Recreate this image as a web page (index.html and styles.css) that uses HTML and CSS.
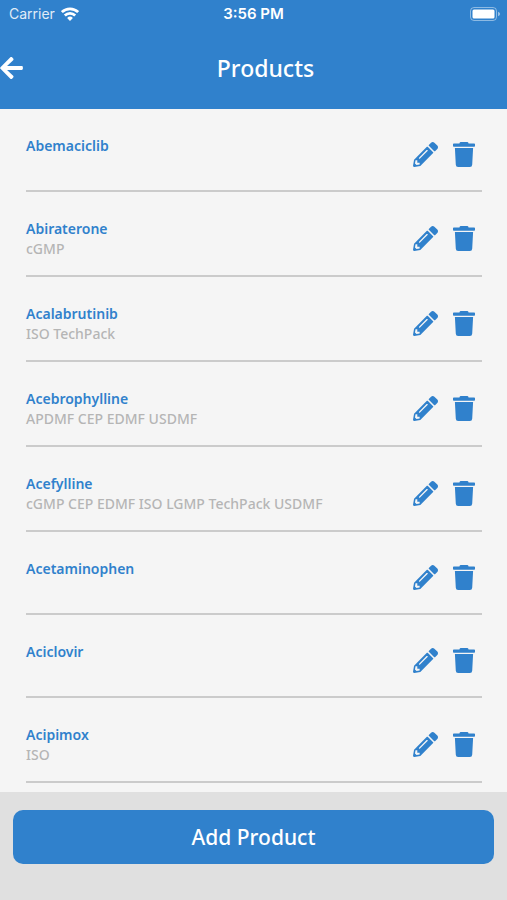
FILE: index.html
```html
<!DOCTYPE html>
<html lang="en">
<head>
<meta charset="utf-8">
<meta name="viewport" content="width=device-width, initial-scale=1">
<title>Products</title>
<link rel="stylesheet" href="styles.css">
</head>
<body>
<svg width="0" height="0" class="sprite" aria-hidden="true">
  <symbol id="pencil" viewBox="0 0 512 512"><path d="M497.9 142.1l-46.1 46.1c-4.7 4.7-12.3 4.7-17 0l-111-111c-4.7-4.7-4.7-12.3 0-17l46.1-46.1c18.7-18.7 49.1-18.7 67.9 0l60.1 60.1c18.8 18.7 18.8 49.1 0 67.9zM284.2 99.8L21.6 362.4.4 483.9c-2.9 16.4 11.4 30.6 27.8 27.8l121.5-21.3 262.6-262.6c4.7-4.7 4.7-12.3 0-17l-111-111c-4.8-4.7-12.4-4.7-17.1 0zM124.1 339.9c-5.5-5.5-5.5-14.3 0-19.8l154-154c5.5-5.5 14.3-5.5 19.8 0s5.5 14.3 0 19.8l-154 154c-5.5 5.5-14.3 5.5-19.8 0zM88 424h48v36.3l-64.5 11.3-31.1-31.1L51.7 376H88v48z"/></symbol>
  <symbol id="trash" viewBox="0 0 22 25"><path d="M7.6 0h6.8q.6 0 .8.6l.4.9h5.6q.8 0 .8.8v1.6q0 .8-.8.8H.8q-.8 0-.8-.8V2.300q0-.8.8-.8h5.600l.4-.9q.2-.6.800-.6zM1.900 6.100h18.200l-.9 16.700q-.1 2.200-2.300 2.200H5.100q-2.200 0-2.300-2.200z"/></symbol>
</svg>
<header class="header">
  <div class="status">
    <div class="status-left">
      <span class="carrier">Carrier</span>
      <svg class="wifi" viewBox="0 0 18 14" aria-hidden="true"><g fill="none" stroke="currentColor" stroke-width="2.7"><path d="M.9 5.100a11.600 11.600 0 0 1 16.200 0"/><path d="M3.800 8.500a7.300 7.300 0 0 1 10.400 0"/></g><path fill="currentColor" d="M6.100 10.900a4.100 4.100 0 0 1 5.800 0L9 13.900z"/></svg>
    </div>
    <span class="clock">3:56 PM</span>
    <svg class="battery" viewBox="0 0 31 14" aria-hidden="true"><rect x=".5" y=".5" width="26" height="13" rx="3.5" fill="none" stroke="currentColor" opacity=".45"/><rect x="2.5" y="2.500" width="22" height="9" rx="1.5" fill="currentColor"/><path d="M28 4.800c2.800.8 2.800 3.600 0 4.400z" fill="currentColor" opacity=".5"/></svg>
  </div>
  <div class="nav">
    <button class="back" type="button" aria-label="Back"><svg viewBox="0 0 448 512" aria-hidden="true"><path d="M257.5 445.1l-22.2 22.2c-9.4 9.4-24.6 9.4-33.9 0L7 273c-9.4-9.4-9.4-24.6 0-33.9L201.4 44.7c9.4-9.4 24.6-9.4 33.9 0l22.2 22.2c9.5 9.5 9.3 25-.4 34.3L136.6 216H424c13.3 0 24 10.7 24 24v32c0 13.3-10.7 24-24 24H136.6l120.5 114.8c9.8 9.3 10 24.8.4 34.3z"/></svg></button>
    <h1 class="title">Products</h1>
  </div>
</header>
<main class="content">
  <ul class="products">
    <li class="product"><div class="info"><h2 class="name">Abemaciclib</h2></div><button class="action" type="button" aria-label="Edit Abemaciclib"><svg class="pencil"><use href="#pencil"/></svg></button><button class="action" type="button" aria-label="Delete Abemaciclib"><svg class="trash"><use href="#trash"/></svg></button></li>
    <li class="product"><div class="info"><h2 class="name">Abiraterone</h2><p class="tags">cGMP</p></div><button class="action" type="button" aria-label="Edit Abiraterone"><svg class="pencil"><use href="#pencil"/></svg></button><button class="action" type="button" aria-label="Delete Abiraterone"><svg class="trash"><use href="#trash"/></svg></button></li>
    <li class="product"><div class="info"><h2 class="name">Acalabrutinib</h2><p class="tags">ISO TechPack</p></div><button class="action" type="button" aria-label="Edit Acalabrutinib"><svg class="pencil"><use href="#pencil"/></svg></button><button class="action" type="button" aria-label="Delete Acalabrutinib"><svg class="trash"><use href="#trash"/></svg></button></li>
    <li class="product"><div class="info"><h2 class="name">Acebrophylline</h2><p class="tags">APDMF CEP EDMF USDMF</p></div><button class="action" type="button" aria-label="Edit Acebrophylline"><svg class="pencil"><use href="#pencil"/></svg></button><button class="action" type="button" aria-label="Delete Acebrophylline"><svg class="trash"><use href="#trash"/></svg></button></li>
    <li class="product"><div class="info"><h2 class="name">Acefylline</h2><p class="tags">cGMP CEP EDMF ISO LGMP TechPack USDMF</p></div><button class="action" type="button" aria-label="Edit Acefylline"><svg class="pencil"><use href="#pencil"/></svg></button><button class="action" type="button" aria-label="Delete Acefylline"><svg class="trash"><use href="#trash"/></svg></button></li>
    <li class="product"><div class="info"><h2 class="name">Acetaminophen</h2></div><button class="action" type="button" aria-label="Edit Acetaminophen"><svg class="pencil"><use href="#pencil"/></svg></button><button class="action" type="button" aria-label="Delete Acetaminophen"><svg class="trash"><use href="#trash"/></svg></button></li>
    <li class="product"><div class="info"><h2 class="name">Aciclovir</h2></div><button class="action" type="button" aria-label="Edit Aciclovir"><svg class="pencil"><use href="#pencil"/></svg></button><button class="action" type="button" aria-label="Delete Aciclovir"><svg class="trash"><use href="#trash"/></svg></button></li>
    <li class="product"><div class="info"><h2 class="name">Acipimox</h2><p class="tags">ISO</p></div><button class="action" type="button" aria-label="Edit Acipimox"><svg class="pencil"><use href="#pencil"/></svg></button><button class="action" type="button" aria-label="Delete Acipimox"><svg class="trash"><use href="#trash"/></svg></button></li>
  </ul>
</main>
<footer class="footer">
  <button class="add" type="button">Add Product</button>
</footer>
</body>
</html>
```
FILE: styles.css
```css
:root {
  --blue: #3081cc;
}

* {
  box-sizing: border-box;
}

body {
  margin: 0;
  min-height: 100vh;
  display: flex;
  flex-direction: column;
  background: #f5f5f5;
  font-family: "Noto Sans", "Open Sans", sans-serif;
}

button {
  margin: 0;
  padding: 0;
  border: 0;
  background: none;
  color: inherit;
  font: inherit;
  cursor: pointer;
}

svg {
  display: block;
  fill: currentColor;
}

.sprite {
  position: absolute;
}

.header {
  background: var(--blue);
  color: #fff;
}

.status {
  display: grid;
  grid-template-columns: 1fr auto 1fr;
  align-items: center;
  height: 27px;
  padding: 0 6px;
  font-family: Inter, sans-serif;
  font-size: 14px;
}

.status-left {
  display: flex;
  align-items: center;
  gap: 6px;
  padding-left: 3px;
}

.carrier {
  opacity: 0.85;
}

.wifi {
  width: 18px;
  height: 14px;
}

.clock {
  font-size: 15px;
  font-weight: 600;
}

.battery {
  width: 31px;
  height: 14px;
  justify-self: end;
}

.nav {
  display: grid;
  grid-template-columns: 48px 1fr 24px;
  align-items: center;
  height: 82px;
}

.back svg {
  width: 23px;
  height: 26px;
}

.title {
  margin: 0;
  font-size: 23px;
  font-weight: 500;
  line-height: 32px;
  text-align: center;
}

.content {
  flex: 1;
  padding: 0 25px 9px 26px;
}

.products {
  margin: 0;
  padding: 0;
  list-style: none;
}

.product {
  display: flex;
  align-items: center;
  gap: 15px;
  padding: 25px 7px 15px 0;
  border-bottom: 2px solid #cbcbcb;
}

.info {
  flex: 1;
  min-height: 41px;
  padding: 2px 0 1px;
}

.name,
.tags {
  margin: 0;
  font-size: 14px;
  line-height: 20px;
}

.name {
  color: var(--blue);
  font-weight: 600;
}

.tags {
  color: #b5b5b5;
  font-weight: 500;
}

.action {
  color: var(--blue);
}

.pencil {
  width: 25px;
  height: 25px;
}

.trash {
  width: 22px;
  height: 25px;
}

.footer {
  position: sticky;
  bottom: 0;
  padding: 18px 13px 36px;
  background: #e0e0e0;
}

.add {
  display: block;
  width: 100%;
  height: 54px;
  border-radius: 10px;
  background: var(--blue);
  color: #fff;
  font-size: 21px;
  font-weight: 500;
}
```
